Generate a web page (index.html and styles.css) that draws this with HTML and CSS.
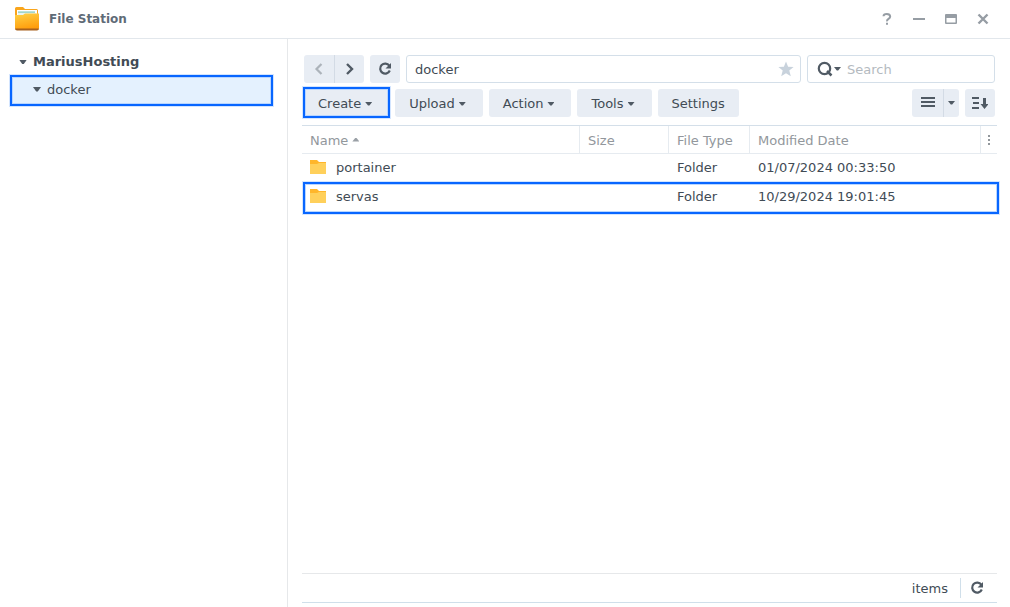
FILE: index.html
```html
<!DOCTYPE html>
<html lang="en">
<head>
<meta charset="utf-8">
<title>File Station</title>
<link rel="stylesheet" href="styles.css">
</head>
<body>
<div class="window">
  <header class="titlebar">
    <svg class="app-icon" width="26" height="26" viewBox="0 0 26 26" aria-hidden="true">
      <defs>
        <linearGradient id="front" x1="0" y1="0" x2="0.3" y2="1">
          <stop offset="0" stop-color="#ffd244"/>
          <stop offset="1" stop-color="#ff9d0c"/>
        </linearGradient>
      </defs>
      <path d="M1 2.500Q1 1 2.500 1H9l2 2h11.500Q24 3 24 4.500V10H1z" fill="#f9a51c"/>
      <path d="M3 4h20v6H3z" fill="#fff"/>
      <path d="M4 5.500h17v1.200H4z" fill="#7cc5b0"/>
      <path d="M4 7h18v3H4z" fill="#e9f4ee"/>
      <path d="M1 9h8l2-1.500h14V22q0 2-2 2H3q-2 0-2-2z" fill="url(#front)"/>
      <path d="M1 22.500h24q-.3 2-2 2H3q-1.700 0-2-2z" fill="#a8611d"/>
    </svg>
    <h1 class="title">File Station</h1>
    <div class="window-controls">
      <button class="control" type="button" aria-label="Help">
        <svg width="12" height="14" viewBox="0 0 12 14"><path d="M2.500 4.200Q2.600 2 5.800 2T9.200 4.500Q9.200 5.800 7.500 6.900T6 9.300" fill="none" stroke="currentColor" stroke-width="2"/><path d="M5 10.800h2v2H5z" fill="currentColor"/></svg>
      </button>
      <button class="control" type="button" aria-label="Minimize">
        <svg width="12" height="14" viewBox="0 0 12 14"><path d="M0 6h12v2H0z" fill="currentColor"/></svg>
      </button>
      <button class="control" type="button" aria-label="Maximize">
        <svg width="12" height="14" viewBox="0 0 12 14"><path d="M1 2h10q1 0 1 1v8q0 1-1 1H1q-1 0-1-1V3q0-1 1-1zm.5 4v4.500h9V6z" fill="currentColor" fill-rule="evenodd"/></svg>
      </button>
      <button class="control" type="button" aria-label="Close">
        <svg width="12" height="14" viewBox="0 0 12 14"><path d="M1.500 2.500l9 9m0-9l-9 9" stroke="currentColor" stroke-width="2.400"/></svg>
      </button>
    </div>
  </header>

  <div class="body">
    <nav class="sidebar" aria-label="Folders">
      <button class="tree-item root" type="button"><span class="caret wide"></span>MariusHosting</button>
      <button class="tree-item child marked" type="button"><span class="caret wide"></span>docker</button>
    </nav>

    <main class="content">
      <div class="toolbar">
        <div class="button-group">
          <button class="button icon" type="button" aria-label="Back" disabled>
            <svg width="14" height="14" viewBox="0 0 14 14"><path d="M9.500 2L4.500 7l5 5" fill="none" stroke="currentColor" stroke-width="2.200"/></svg>
          </button>
          <button class="button icon" type="button" aria-label="Forward">
            <svg width="14" height="14" viewBox="0 0 14 14"><path d="M4 2l5 5-5 5" fill="none" stroke="currentColor" stroke-width="2.400"/></svg>
          </button>
        </div>
        <button class="button icon" type="button" aria-label="Refresh">
          <svg width="14" height="14" viewBox="0 0 14 14"><path d="M11.300 3.700A5 5 0 1 0 11.800 8.500" fill="none" stroke="currentColor" stroke-width="2.200"/><path d="M13 1v5.500H7.500z" fill="currentColor"/></svg>
        </button>
        <div class="field path">
          <input class="input" type="text" value="docker" aria-label="Path">
          <button class="star" type="button" aria-label="Add to favorites">
            <svg width="16" height="16" viewBox="0 0 16 16"><path d="M8 .5l2.100 5.300 5.500.3-4.300 3.500 1.500 5.700L8 12.200l-4.800 3.100 1.500-5.700L.4 6.100l5.500-.3z" fill="currentColor"/></svg>
          </button>
        </div>
        <div class="field search">
          <button class="search-menu" type="button" aria-label="Search options">
            <svg width="16" height="16" viewBox="0 0 16 16"><circle cx="7.500" cy="7.500" r="5.700" fill="none" stroke="currentColor" stroke-width="2.200"/><path d="M10 10l4.500 4.500" stroke="currentColor" stroke-width="2.500"/></svg>
            <span class="caret"></span>
          </button>
          <input class="input" type="search" placeholder="Search" aria-label="Search">
        </div>
      </div>

      <div class="toolbar">
        <button class="button menu marked" type="button">Create<span class="caret"></span></button>
        <button class="button menu" type="button">Upload<span class="caret"></span></button>
        <button class="button menu" type="button">Action<span class="caret"></span></button>
        <button class="button menu" type="button">Tools<span class="caret"></span></button>
        <button class="button" type="button">Settings</button>
        <div class="button-group view">
          <button class="button icon" type="button" aria-label="List view">
            <svg width="14" height="14" viewBox="0 0 14 14"><path d="M0 1h14v2H0zm0 4h14v2H0zm0 4h14v2H0z" fill="currentColor"/></svg>
          </button>
          <button class="button narrow" type="button" aria-label="View options"><span class="caret"></span></button>
        </div>
        <button class="button icon" type="button" aria-label="Sort">
          <svg width="16" height="14" viewBox="0 0 16 14"><path d="M0 1h7v2H0zm1 5h6v2H1zM0 11h7v2H0zM11 2h3v6h2.500l-4 5-4-5H11z" fill="currentColor"/></svg>
        </button>
      </div>

      <div class="listing">
        <table class="files">
          <colgroup><col class="col-name"><col class="col-size"><col class="col-type"><col><col class="col-more"></colgroup>
          <thead>
            <tr>
              <th scope="col">Name<span class="caret up"></span></th>
              <th scope="col">Size</th>
              <th scope="col">File Type</th>
              <th scope="col">Modified Date</th>
              <th scope="col" class="more"><button class="more-button" type="button" aria-label="Columns">
                <svg width="4" height="12" viewBox="0 0 4 12"><path d="M1 1h2v2H1zm0 4h2v2H1zm0 4h2v2H1z" fill="currentColor"/></svg>
              </button></th>
            </tr>
          </thead>
          <tbody>
            <tr>
              <td><span class="file"><svg width="16" height="16" viewBox="0 0 16 16"><path d="M0 0h7l2 2h7v4H0z" fill="#ffb62b"/><path d="M0 4h7l2-1h7v11H0z" fill="#ffd05b"/></svg>portainer</span></td>
              <td></td><td>Folder</td><td>01/07/2024 00:33:50</td><td></td>
            </tr>
            <tr class="highlighted">
              <td><span class="file"><svg width="16" height="16" viewBox="0 0 16 16"><path d="M0 0h7l2 2h7v4H0z" fill="#ffb62b"/><path d="M0 4h7l2-1h7v11H0z" fill="#ffd05b"/></svg>servas</span></td>
              <td></td><td>Folder</td><td>10/29/2024 19:01:45</td><td></td>
            </tr>
          </tbody>
        </table>
      </div>

      <footer class="statusbar">
        <span class="count">items</span>
        <button class="reload" type="button" aria-label="Reload list">
          <svg width="14" height="14" viewBox="0 0 14 14"><path d="M11.300 3.700A5 5 0 1 0 11.800 8.500" fill="none" stroke="currentColor" stroke-width="2.200"/><path d="M13 1v5.500H7.500z" fill="currentColor"/></svg>
        </button>
      </footer>
    </main>
  </div>
</div>
</body>
</html>
```
FILE: styles.css
```css
* {
  box-sizing: border-box;
}

body {
  margin: 0;
  background: #fff;
  color: #414b55;
  font: 13px/20px Verdana, "DejaVu Sans", sans-serif;
}

button,
input {
  margin: 0;
  padding: 0;
  border: 0;
  background: none;
  color: inherit;
  font: inherit;
}

svg {
  display: block;
  flex: none;
}

.window {
  display: flex;
  flex-direction: column;
  height: 100vh;
}

.titlebar {
  display: flex;
  align-items: center;
  gap: 9px;
  height: 39px;
  padding: 0 21px 0 14px;
  border-bottom: 1px solid #e2e7ec;
}

.title {
  margin: 0;
  color: #5f6b77;
  font-size: 12px;
  font-weight: bold;
}

.window-controls {
  display: flex;
  gap: 20px;
  margin-left: auto;
  color: #969da4;
}

.body {
  display: flex;
  flex: 1;
  min-height: 0;
}

.sidebar {
  flex: none;
  width: 288px;
  padding: 8px 14px 0 10px;
  border-right: 1px solid #e6e8ea;
}

.tree-item {
  display: flex;
  align-items: center;
  gap: 6px;
  width: 100%;
  height: 28px;
  text-align: left;
}

.root {
  padding: 2px 0 0 9px;
  font-weight: bold;
}

.child {
  height: 31px;
  padding: 0 0 2px 23px;
  background: #e4f1fe;
}

.caret {
  flex: none;
  width: 7px;
  height: 4px;
  background: #505a64;
  clip-path: polygon(0 0, 100% 0, 60% 90%, 40% 90%);
}

.caret.wide {
  width: 8px;
  height: 5px;
}

.caret.up {
  display: inline-block;
  margin: 0 0 3px 4px;
  background: #9aa0a6;
  clip-path: polygon(40% 10%, 60% 10%, 100% 100%, 0 100%);
}

.marked {
  position: relative;
}

.marked::after,
.highlighted .file::after {
  content: "";
  position: absolute;
  inset: -2px -1px -1px;
  border: 2px solid #0866ff;
  box-shadow: 0 0 0 1px #d3e5ff, inset 0 0 0 1px #b9d6ff;
  pointer-events: none;
}

.child.marked::after {
  inset: 0;
}

.content {
  display: flex;
  flex: 1;
  flex-direction: column;
  min-width: 0;
  padding: 16px 13px 4px 14px;
}

.toolbar {
  display: flex;
  gap: 6px;
  margin-bottom: 6px;
  padding: 0 2px;
}

.button {
  display: flex;
  align-items: center;
  justify-content: center;
  gap: 4px;
  height: 28px;
  padding: 2px 14px 0;
  border-radius: 3px;
  background: #e8edf4;
}

.button.menu {
  padding-right: 17px;
}

.button.icon {
  width: 30px;
  padding: 0;
  color: #505a64;
}

.button.narrow {
  width: 16px;
  padding: 0;
}

.button.icon:disabled {
  color: #acb3ba;
}

.button-group {
  display: flex;
}

.button-group .button:first-child {
  border-radius: 3px 0 0 3px;
}

.button-group .button:last-child {
  border-left: 1px solid #d3dbe5;
  border-radius: 0 3px 3px 0;
}

.button-group.view {
  margin-left: auto;
}

.view .button.icon {
  width: 31px;
}

.field {
  display: flex;
  align-items: center;
  height: 28px;
  border: 1px solid #d4dfe9;
  border-radius: 3px;
}

.path {
  flex: 1;
  min-width: 0;
  padding: 0 6px 0 8px;
}

.search {
  gap: 6px;
  width: 188px;
  padding: 0 8px 0 9px;
}

.input {
  flex: 1;
  min-width: 0;
  padding-top: 2px;
  outline: 0;
}

.input::placeholder {
  color: #b4bac0;
  opacity: 1;
}

.star {
  color: #c8d2dc;
}

.search-menu {
  display: flex;
  align-items: center;
  gap: 1px;
  color: #505a64;
}

.listing {
  flex: 1;
  min-height: 0;
  margin-top: 2px;
  border-top: 1px solid #d4dfe9;
}

.files {
  width: 100%;
  border-spacing: 0;
  table-layout: fixed;
}

.col-name {
  width: 40%;
}

.col-size {
  width: 89px;
}

.col-type {
  width: 81px;
}

.col-more {
  width: 16px;
}

.files th {
  height: 28px;
  padding: 2px 8px 0;
  border-right: 1px solid #e6ebf0;
  border-bottom: 1px solid #e6ebf0;
  color: #92979c;
  font-weight: normal;
  text-align: left;
}

.files .more {
  padding: 0 6px;
  border-right: 0;
}

.more-button {
  display: block;
}

.files td {
  height: 29px;
  padding: 0 8px 2px;
}

.highlighted {
  position: relative;
}

.highlighted .file::after {
  inset: -1px -2px -2px 1px;
}

.file {
  display: flex;
  align-items: center;
  gap: 10px;
}

.statusbar {
  display: flex;
  align-items: center;
  justify-content: flex-end;
  gap: 12px;
  height: 30px;
  border-top: 1px solid #e6e8ea;
  border-bottom: 1px solid #d0dfea;
}

.count {
  padding-top: 2px;
}

.reload {
  padding: 3px 13px 3px 9px;
  border-left: 1px solid #d0dfea;
  color: #505a64;
}
```
